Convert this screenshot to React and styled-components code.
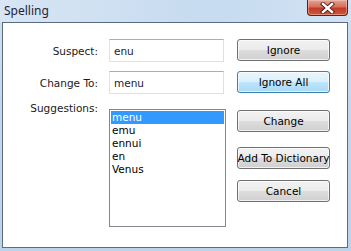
import React from "react";
import styled, { createGlobalStyle } from "styled-components";

const GlobalStyle = createGlobalStyle`
  html, body {
    margin: 0;
    padding: 0;
    width: 351px;
    height: 251px;
    overflow: hidden;
    background: #bcd3ec;
  }
`;

const suggestions = ["menu", "emu", "ennui", "en", "Venus"];

function App() {
  return (
    <>
      <GlobalStyle />
      <Window>
        <TitleBar>
          <Title>Spelling</Title>
          <CloseButton>
            <svg width="15" height="12" viewBox="0 0 15 12">
              <path
                d="M3 2 L12 10 M12 2 L3 10"
                stroke="#4a1a14"
                strokeWidth="4.2"
                strokeLinecap="square"
              />
              <path
                d="M3 2 L12 10 M12 2 L3 10"
                stroke="#ffffff"
                strokeWidth="2.4"
                strokeLinecap="square"
              />
            </svg>
          </CloseButton>
        </TitleBar>
        <Client>
          <Form>
            <Row>
              <Label>Suspect:</Label>
              <TextBox>enu</TextBox>
            </Row>
            <Row $top={9}>
              <Label>Change To:</Label>
              <TextBox>menu</TextBox>
            </Row>
            <Row $top={15} $start>
              <Label $up>Suggestions:</Label>
              <ListBox>
                {suggestions.map((word, i) => (
                  <ListItem key={word} $selected={i === 0}>
                    {word}
                  </ListItem>
                ))}
              </ListBox>
            </Row>
          </Form>
          <Buttons>
            <Button>Ignore</Button>
            <Button $top={10} $focused>
              Ignore All
            </Button>
            <Button $top={17}>Change</Button>
            <Button $top={15}>Add To Dictionary</Button>
            <Button $top={11}>Cancel</Button>
          </Buttons>
        </Client>
      </Window>
    </>
  );
}

export default App;

const Window = styled.div`
  width: 351px;
  height: 251px;
  display: flex;
  flex-direction: column;
  background: linear-gradient(180deg, #cfe0f2 0%, #c3d8ee 40%, #bcd3ec 100%);
  font-family: "DejaVu Sans", Tahoma, sans-serif;
  font-size: 10.5px;
  color: #000;
`;

const TitleBar = styled.div`
  height: 22px;
  display: flex;
  align-items: flex-start;
  justify-content: space-between;
  background: linear-gradient(
    90deg,
    #d7e5f4 0%,
    #cfe0f2 30%,
    #c6dbf0 60%,
    #d2e2f3 100%
  );
`;

const Title = styled.div`
  font-family: "Noto Sans", "Open Sans", sans-serif;
  font-size: 12px;
  color: #1e1e3c;
  padding: 3px 0 0 4px;
  line-height: 16px;
`;

const CloseButton = styled.div`
  width: 41px;
  height: 16px;
  margin-right: 3px;
  box-sizing: border-box;
  border: 1px solid #5e2018;
  border-top: none;
  border-radius: 0 0 4px 4px;
  background: linear-gradient(180deg, #e3a393 0%, #d5705c 45%, #c23a26 55%, #cf5a40 100%);
  box-shadow: inset 0 0 0 1px rgba(255, 210, 200, 0.45);
  display: flex;
  align-items: center;
  justify-content: center;
`;

const Client = styled.div`
  flex: 1;
  margin: 0 3px 3px 2px;
  background: #fff;
  border: 1px solid #5c6b7d;
  display: flex;
  padding: 16px 0 0 0;
`;

const Form = styled.div`
  display: flex;
  flex-direction: column;
  width: 234px;
`;

const Row = styled.div`
  display: flex;
  align-items: ${(p) => (p.$start ? "flex-start" : "center")};
  margin-top: ${(p) => p.$top || 0}px;
`;

const Label = styled.div`
  width: 95px;
  text-align: right;
  margin-right: 11px;
  margin-top: ${(p) => (p.$up ? "-7px" : "0")};
  line-height: 12px;
  color: #1a1a1a;
`;

const TextBox = styled.div`
  width: 115px;
  height: 23px;
  box-sizing: border-box;
  border: 1px solid #dbdfe6;
  border-top-color: #abadb3;
  border-left-color: #e2e3ea;
  padding: 0 4px;
  display: flex;
  align-items: center;
  color: #1a1a40;
`;

const ListBox = styled.div`
  width: 117px;
  height: 118px;
  box-sizing: border-box;
  border: 1px solid #828790;
  padding: 1px;
  display: flex;
  flex-direction: column;
`;

const ListItem = styled.div`
  height: 13px;
  line-height: 13px;
  padding-left: 1px;
  background: ${(p) => (p.$selected ? "#3399ff" : "transparent")};
  color: ${(p) => (p.$selected ? "#fff" : "#000")};
`;

const Buttons = styled.div`
  display: flex;
  flex-direction: column;
`;

const Button = styled.div`
  width: 93px;
  height: 22px;
  box-sizing: border-box;
  margin-top: ${(p) => p.$top || 0}px;
  border: 1px solid ${(p) => (p.$focused ? "#3c7fb1" : "#707070")};
  border-radius: 3px;
  background: ${(p) =>
    p.$focused
      ? "linear-gradient(180deg, #eaf6fd 0%, #d9f0fc 50%, #bee6fd 51%, #a7d9f5 100%)"
      : "linear-gradient(180deg, #f2f2f2 0%, #ebebeb 50%, #dddddd 51%, #cfcfcf 100%)"};
  box-shadow: inset 0 0 0 1px rgba(255, 255, 255, 0.7);
  display: flex;
  align-items: center;
  justify-content: center;
  white-space: nowrap;
  color: #000;
`;
